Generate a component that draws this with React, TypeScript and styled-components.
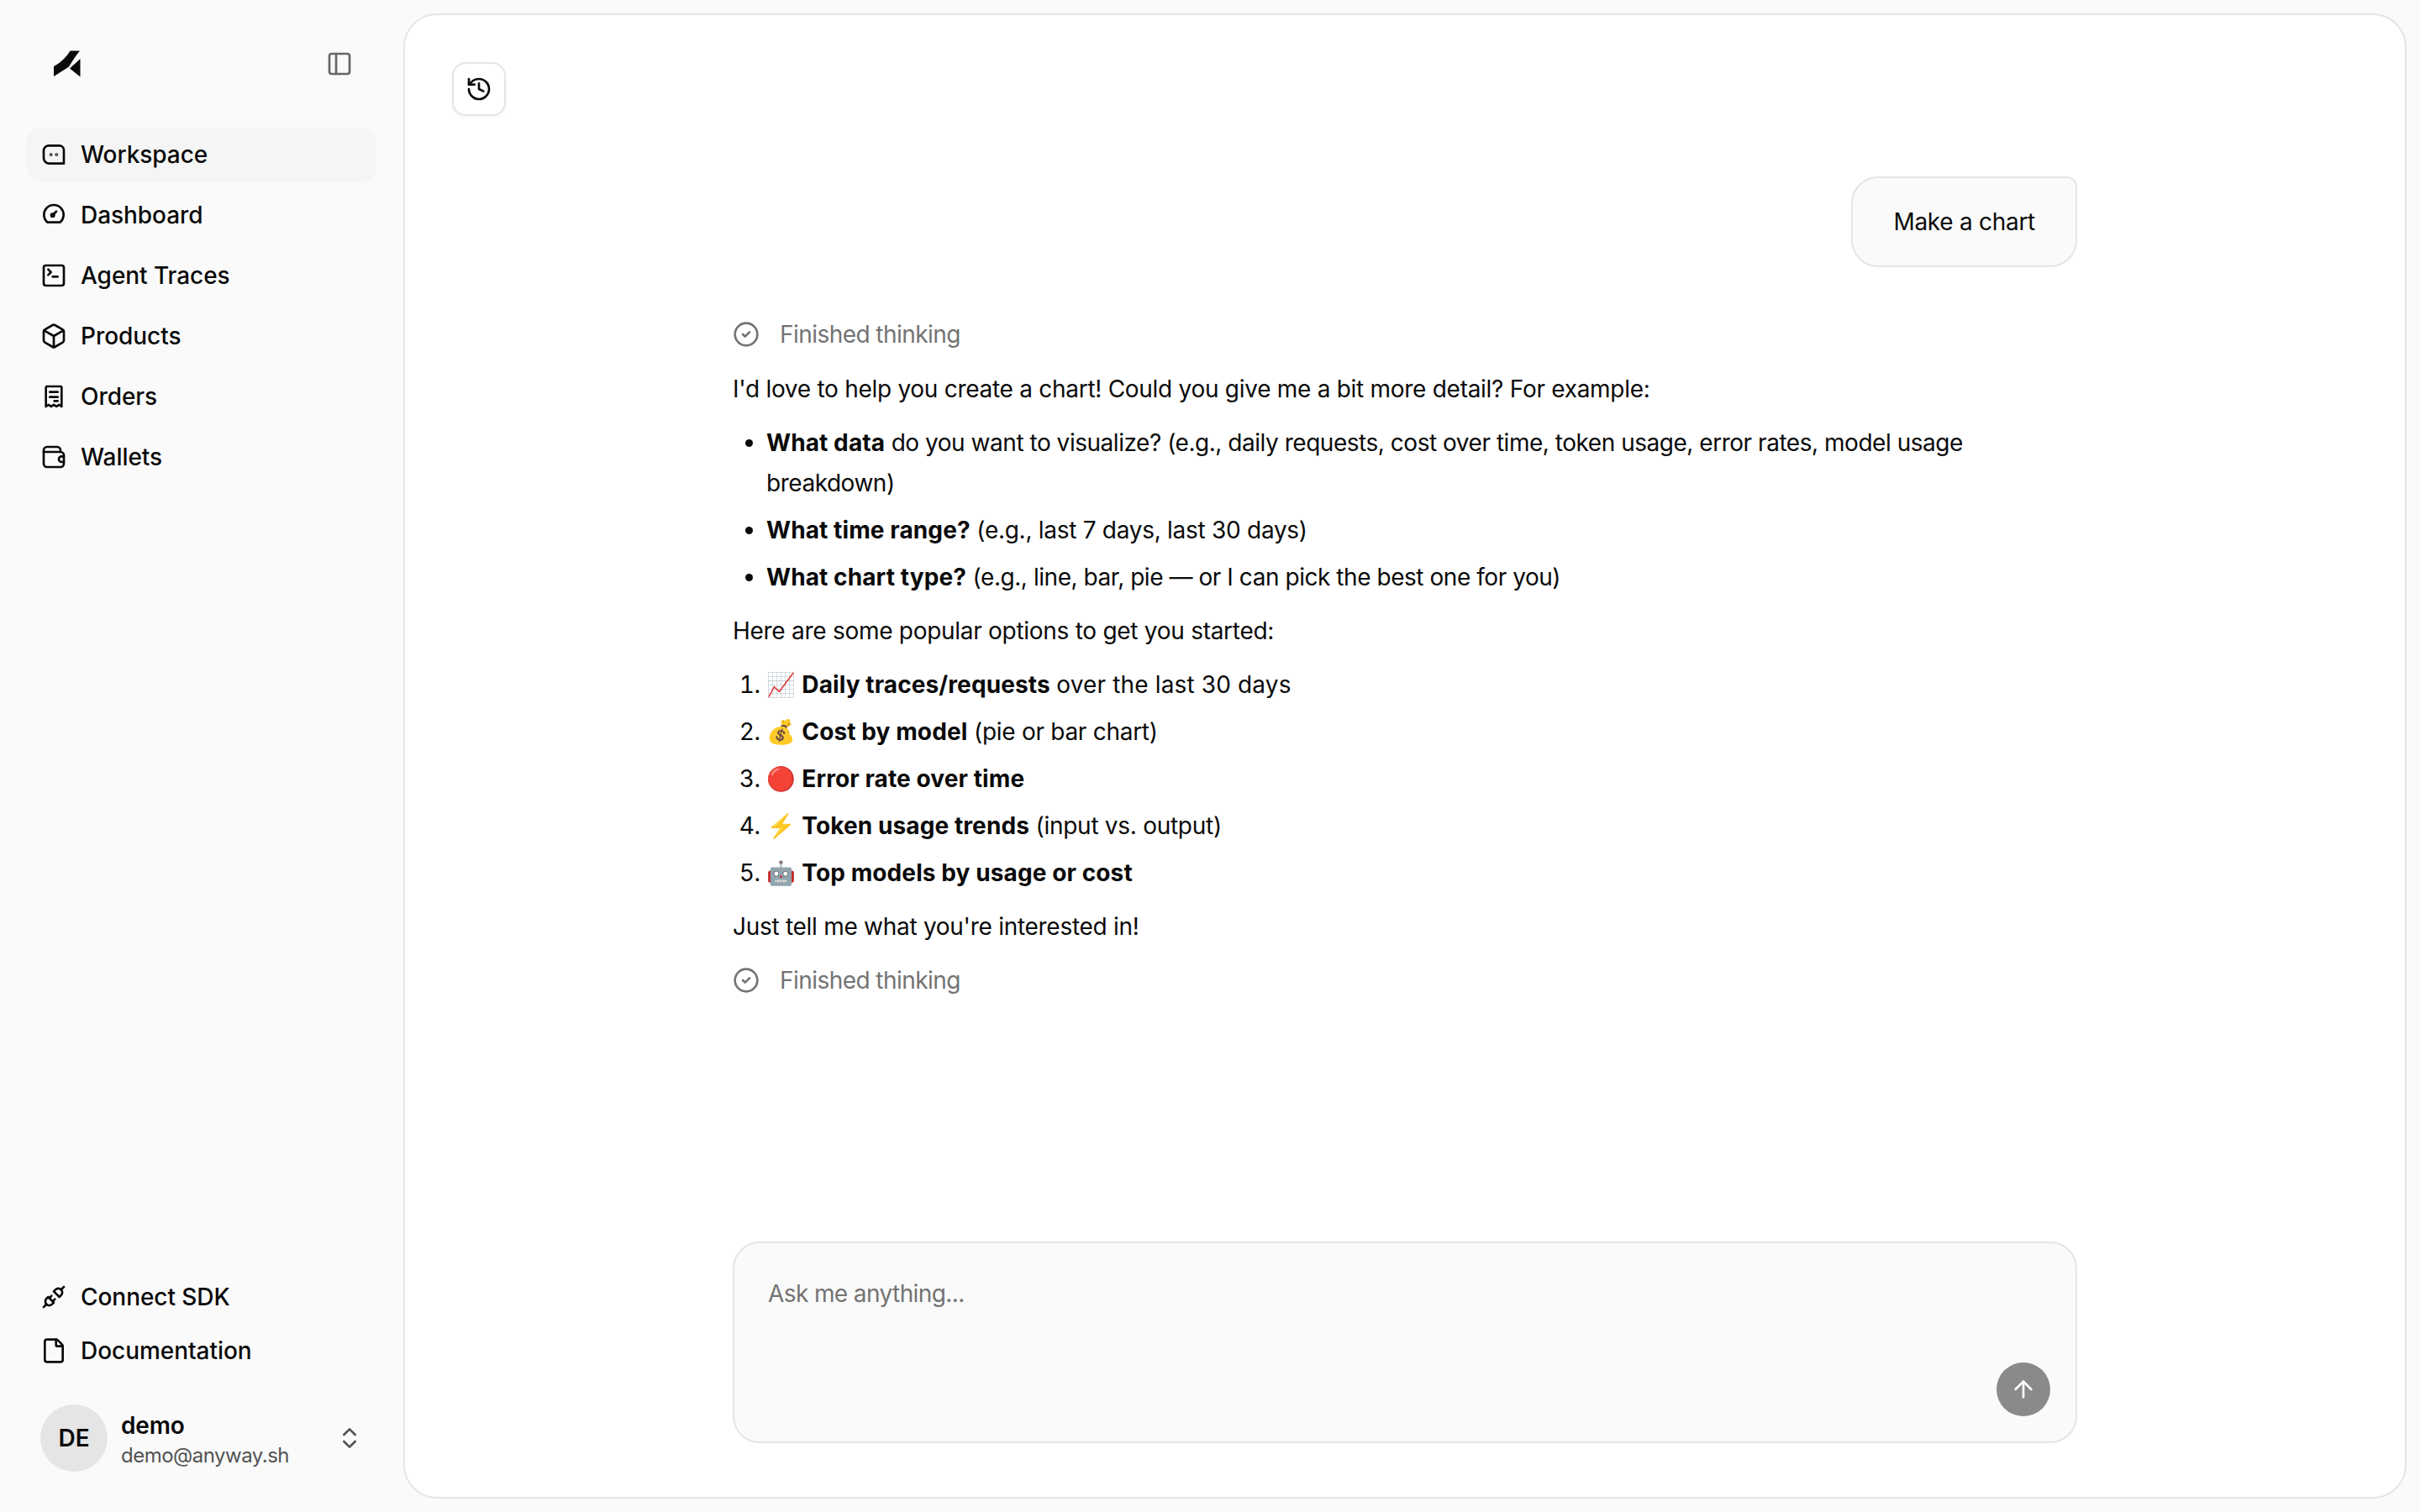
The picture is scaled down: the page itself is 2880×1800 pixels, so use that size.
import React from "react";
import styled, { createGlobalStyle, css } from "styled-components";
import { ArrowUp, Box, ChevronsUpDown, CircleCheck, File, History, PanelLeft } from "lucide-react";

const Global = createGlobalStyle`
  html, body { margin: 0; padding: 0; height: 100%; background: #fafafa; }
  #root { height: 100%; }
  * { box-sizing: border-box; }
  body { font-family: Inter, "Noto Sans", sans-serif; color: #0a0a0a; }
`;

const Shell = styled.div`
  display: flex;
  height: 1800px;
  width: 2880px;
  background: #fafafa;
  overflow: hidden;
`;

const Sidebar = styled.aside`
  width: 480px;
  flex: none;
  display: flex;
  flex-direction: column;
  padding: 0 32px;
`;

const Brand = styled.div`
  height: 152px;
  display: flex;
  align-items: center;
  justify-content: space-between;
  padding: 0 28px 0 32px;
`;

const Nav = styled.nav`
  display: flex;
  flex-direction: column;
  gap: 8px;
`;

const NavItem = styled.div<{ $active?: boolean }>`
  height: 64px;
  border-radius: 16px;
  display: flex;
  align-items: center;
  gap: 16px;
  padding: 0 16px;
  font-size: 28px;
  font-weight: 500;
  letter-spacing: -0.05px;
  background: ${(p) => (p.$active ? "#f5f5f5" : "transparent")};
  color: #0a0a0a;
  svg { flex: none; }
`;

const Spacer = styled.div`
  flex: 1;
`;

const FootNav = styled.div`
  display: flex;
  flex-direction: column;
`;

const UserRow = styled.div`
  display: flex;
  align-items: center;
  padding: 0 16px;
  margin-top: 32px;
  margin-bottom: 48px;
  gap: 16px;
`;

const Avatar = styled.div`
  width: 80px;
  height: 80px;
  flex: none;
  border-radius: 50%;
  background: #e5e5e5;
  display: flex;
  align-items: center;
  justify-content: center;
  font-size: 28px;
  font-weight: 600;
`;

const UserText = styled.div`
  flex: 1;
  display: flex;
  flex-direction: column;
  gap: 2px;
  padding-top: 3px;
`;

const UserName = styled.div`
  font-size: 28px;
  line-height: 36px;
  font-weight: 600;
  letter-spacing: -0.2px;
`;

const UserMail = styled.div`
  font-size: 24px;
  line-height: 32px;
  color: #525252;
  letter-spacing: -0.5px;
`;

const Panel = styled.main`
  flex: 1;
  margin: 16px 16px 16px 0;
  background: #fff;
  border: 2px solid #e5e5e5;
  border-radius: 40px;
  display: flex;
  flex-direction: column;
  padding: 56px 56px 0;
`;

const HistoryButton = styled.div`
  width: 64px;
  height: 64px;
  border-radius: 16px;
  border: 2px solid #e5e5e5;
  background: #fff;
  display: flex;
  align-items: center;
  justify-content: center;
  box-shadow: 0 2px 4px rgba(0, 0, 0, 0.04);
`;

const Column = styled.div`
  width: 1600px;
  margin: 0 auto;
  flex: 1;
  display: flex;
  flex-direction: column;
  font-size: 28px;
  letter-spacing: -0.28px;
`;

const UserBubble = styled.div`
  align-self: flex-end;
  margin-top: 72px;
  height: 108px;
  padding: 0 48px;
  display: flex;
  align-items: center;
  border: 2px solid #e5e5e5;
  background: #fafafa;
  border-radius: 32px 12px 32px 32px;
`;

const Thinking = styled.div<{ $top: number; $bottom: number }>`
  display: flex;
  align-items: center;
  gap: 24px;
  color: #737373;
  height: 44px;
  letter-spacing: -0.55px;
  margin: ${(p) => p.$top}px 0 ${(p) => p.$bottom}px;
`;

const Para = styled.p`
  margin: 0;
  line-height: 48px;
`;

const listStyle = css`
  margin: 16px 0;
  padding: 0 0 0 40px;
  display: flex;
  flex-direction: column;
  gap: 8px;
  line-height: 48px;
`;

const Bullets = styled.ul`
  ${listStyle}
`;

const Numbers = styled.ol`
  ${listStyle}
`;

const Strong = styled.strong`
  font-weight: 700;
  letter-spacing: 0.1px;
`;

const Run = styled.span<{ $spacing: number }>`
  letter-spacing: ${(p) => p.$spacing}px;
`;

const Composer = styled.div`
  height: 240px;
  margin-bottom: 64px;
  border: 2px solid #e5e5e5;
  border-radius: 32px;
  background: #fafafa;
  position: relative;
  padding: 43px 40px;
  color: #737373;
  letter-spacing: -0.6px;
`;

const Send = styled.div`
  position: absolute;
  right: 30px;
  bottom: 30px;
  width: 64px;
  height: 64px;
  border-radius: 50%;
  background: #8a8a8a;
  display: flex;
  align-items: center;
  justify-content: center;
`;

const Ico: React.FC<{ children: React.ReactNode }> = ({ children }) => (
  <svg width={32} height={32} viewBox="0 0 24 24" fill="none" stroke="#0a0a0a" strokeWidth="2" strokeLinecap="round" strokeLinejoin="round">
    {children}
  </svg>
);

const Logo = () => (
  <svg width="32" height="32" viewBox="0 0 32 32">
    <path d="M0 31V19C8 15 15 8 19.5 0.5H31C26 6 22 13 18 19.5Z" fill="#0a0a0a" />
    <path d="M31.5 10V31.5L19 21.5Z" fill="#0a0a0a" />
  </svg>
);

const icons: Record<string, React.ReactNode> = {
  Workspace: (
    <Ico>
      <path d="M7.500 4h9.500a4 4 0 0 1 4 4v12H8a5 5 0 0 1-5-5V8.500A4.500 4.500 0 0 1 7.500 4z" />
      <circle cx="9.500" cy="12" r="0.4" />
      <circle cx="14.500" cy="12" r="0.4" />
    </Ico>
  ),
  Dashboard: (
    <Ico>
      <path d="M6.400 18.500A8.750 8.750 0 1 1 17.600 18.500Z" />
      <circle cx="11" cy="12.200" r="1.300" fill="#0a0a0a" />
      <path d="M11 12.200l3.200-3.400" />
    </Ico>
  ),
  "Agent Traces": (
    <Ico>
      <rect x="3" y="3" width="18" height="18" rx="2" />
      <path d="M7 6.500l2.500 2.500L7 11.500" />
      <path d="M11 13h4.500" />
    </Ico>
  ),
  Products: <Box size={32} color="#0a0a0a" />,
  Orders: (
    <Ico>
      <path d="M6 3h12a1 1 0 0 1 1 1v17l-2.300-1.600-2.300 1.600-2.400-1.600-2.400 1.600-2.300-1.600L5 21V4a1 1 0 0 1 1-1z" />
      <path d="M8.500 8h7" />
      <path d="M8.500 12.500h7" />
      <path d="M12.500 16h3" />
    </Ico>
  ),
  Wallets: (
    <Ico>
      <path d="M18 7.500V6a3 3 0 0 0-3-3H6a3 3 0 0 0-3 3v12a3 3 0 0 0 3 3h12a3 3 0 0 0 3-3v-1.500" />
      <path d="M3 7.500h15a3 3 0 0 1 3 3v1" />
      <path d="M21 11.500h-2a2.500 2.500 0 0 0 0 5h2z" />
    </Ico>
  ),
};

const items = ["Workspace", "Dashboard", "Agent Traces", "Products", "Orders", "Wallets"];

export default function App() {
  return (
    <Shell>
      <Global />
      <Sidebar>
        <Brand>
          <Logo />
          <PanelLeft size={32} color="#666666" />
        </Brand>
        <Nav>
          {items.map((t, i) => (
            <NavItem key={t} $active={i === 0}>
              {icons[t]}
              {t}
            </NavItem>
          ))}
        </Nav>
        <Spacer />
        <FootNav>
          <NavItem>
            <Ico>
              <path d="M7 12l5 5-1.500 1.500a3.536 3.536 0 1 1-5-5L7 12" />
              <path d="M17 12l-5-5 1.500-1.500a3.536 3.536 0 1 1 5 5L17 12" />
              <path d="M3 21l2.500-2.500" />
              <path d="M18.500 5.500L21 3" />
              <path d="M10 11l-2 2" />
              <path d="M13 14l-2 2" />
            </Ico>
            Connect SDK
          </NavItem>
          <NavItem>
            <File size={32} color="#0a0a0a" />
            Documentation
          </NavItem>
        </FootNav>
        <UserRow>
          <Avatar>DE</Avatar>
          <UserText>
            <UserName>demo</UserName>
            <UserMail>demo@anyway.sh</UserMail>
          </UserText>
          <ChevronsUpDown size={32} color="#525252" />
        </UserRow>
      </Sidebar>
      <Panel>
        <HistoryButton>
          <History size={32} color="#0a0a0a" />
        </HistoryButton>
        <Column>
          <UserBubble>Make a chart</UserBubble>
          <Thinking $top={58} $bottom={19}>
            <CircleCheck size={32} color="#737373" />
            Finished thinking
          </Thinking>
          <Para>I'd love to help you create a chart! Could you give me a bit more detail? For example:</Para>
          <Bullets>
            <li><Strong>What data</Strong> <Run $spacing={-0.47}>do you want to visualize? (e.g., daily requests, cost over time, token usage, error rates, model usage breakdown)</Run></li>
            <li><Strong>What time range?</Strong> (e.g., last 7 days, last 30 days)</li>
            <li><Strong>What chart type?</Strong> <Run $spacing={-0.45}>(e.g., line, bar, pie — or I can pick the best one for you)</Run></li>
          </Bullets>
          <Para>Here are some popular options to get you started:</Para>
          <Numbers>
            <li>📈 <Strong>Daily traces/requests</Strong> <Run $spacing={0.15}>over the last 30 days</Run></li>
            <li>💰 <Strong>Cost by model</Strong> (pie or bar chart)</li>
            <li>🔴 <Strong>Error rate over time</Strong></li>
            <li>⚡ <Strong>Token usage trends</Strong> (input vs. output)</li>
            <li>🤖 <Strong>Top models by usage or cost</Strong></li>
          </Numbers>
          <Para>Just tell me what you're interested in!</Para>
          <Thinking $top={18} $bottom={0}>
            <CircleCheck size={32} color="#737373" />
            Finished thinking
          </Thinking>
          <Spacer />
          <Composer>
            Ask me anything...
            <Send>
              <ArrowUp size={32} color="#ffffff" />
            </Send>
          </Composer>
        </Column>
      </Panel>
    </Shell>
  );
}
